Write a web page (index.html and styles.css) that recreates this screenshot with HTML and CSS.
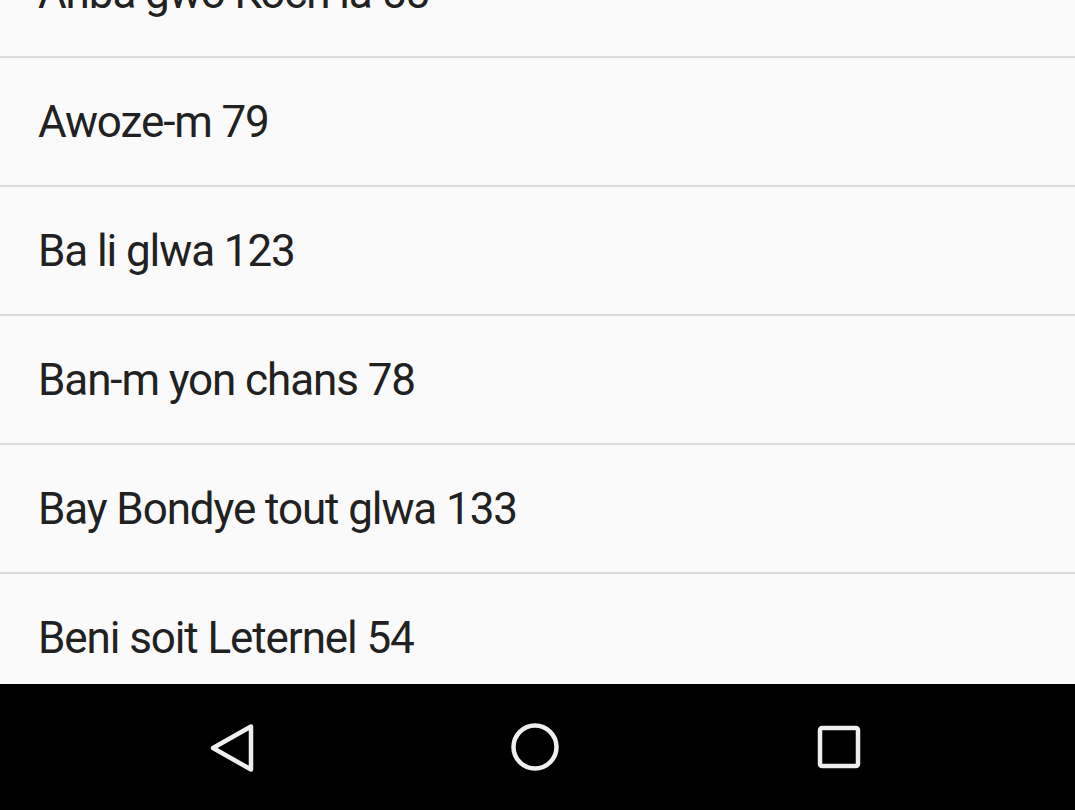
FILE: index.html
```html
<!DOCTYPE html>
<html>
<head>
<meta charset="utf-8">
<link rel="stylesheet" href="styles.css">
</head>
<body>
<div class="screen">
  <ul class="list">
    <li class="row">Anba gwo Koch la 55</li>
    <li class="row">Awoze-m 79</li>
    <li class="row">Ba li glwa 123</li>
    <li class="row">Ban-m yon chans 78</li>
    <li class="row">Bay Bondye tout glwa 133</li>
    <li class="row">Beni soit Leternel 54</li>
  </ul>
  <nav class="navbar">
    <svg class="nav-icon" width="60" height="60" viewBox="0 0 60 60">
      <path d="M11 31 L49 9.5 L49 52.5 Z" fill="none" stroke="#efefef" stroke-width="4.5" stroke-linejoin="round"/>
    </svg>
    <svg class="nav-icon" width="60" height="60" viewBox="0 0 60 60">
      <circle cx="30" cy="30" r="21.5" fill="none" stroke="#efefef" stroke-width="4.5"/>
    </svg>
    <svg class="nav-icon" width="60" height="60" viewBox="0 0 60 60">
      <rect x="11" y="11" width="38" height="38" rx="2" fill="none" stroke="#efefef" stroke-width="4.5"/>
    </svg>
  </nav>
</div>
</body>
</html>
```
FILE: styles.css
```css
html, body {
  margin: 0;
  padding: 0;
  background: #fafafa;
}
.screen {
  width: 1075px;
  height: 810px;
  display: flex;
  flex-direction: column;
  overflow: hidden;
}
.list {
  list-style: none;
  margin: -71px 0 0 0;
  padding: 0;
  flex: 1;
  overflow: hidden;
  background: #fafafa;
}
.row {
  height: 127px;
  display: flex;
  align-items: center;
  padding-left: 38px;
  border-bottom: 2px solid #dcdcdc;
  font-family: Roboto, "Noto Sans", sans-serif;
  font-size: 44px;
  letter-spacing: -1.1px;
  color: #212121;
}
.navbar {
  height: 126px;
  flex: none;
  background: #000;
  display: flex;
  align-items: center;
}
.nav-icon:nth-child(1) { margin-left: 202px; }
.nav-icon:nth-child(2) { margin-left: 243px; }
.nav-icon:nth-child(3) { margin-left: 244px; }
```
